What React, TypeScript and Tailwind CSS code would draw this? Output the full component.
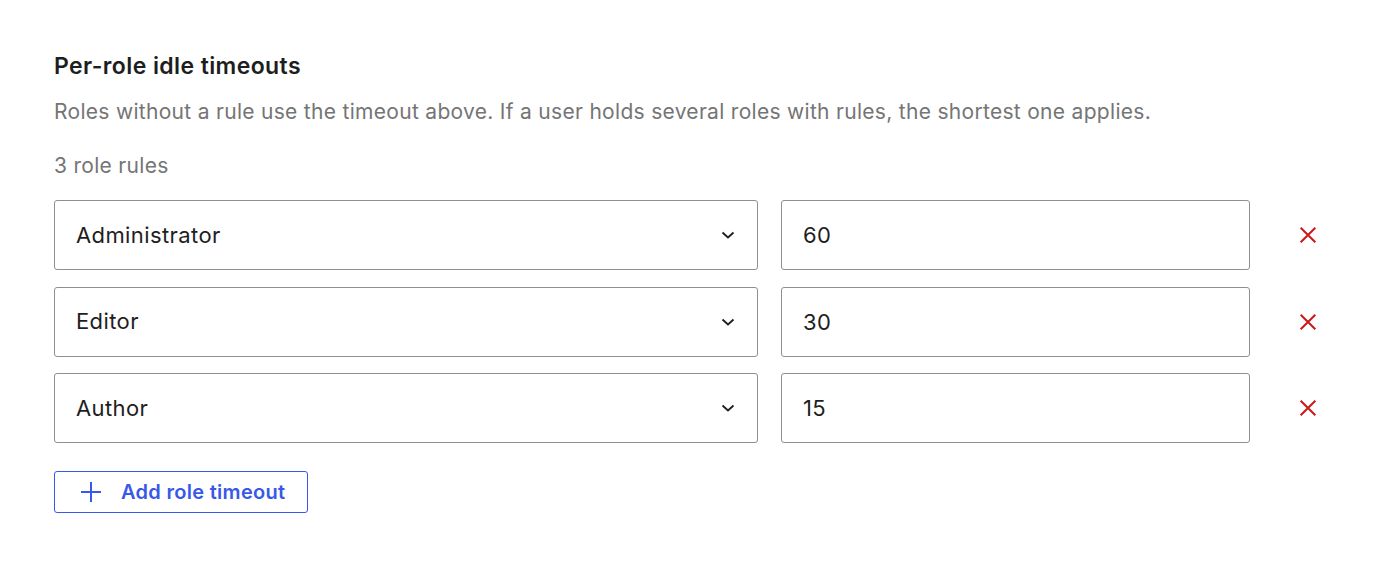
import React, { useState } from 'react';

type Rule = { id: number; role: string; minutes: string };

const roles = ['Administrator', 'Editor', 'Author', 'Contributor', 'Subscriber'];

const Chevron = () => (
  <svg width="16" height="16" viewBox="0 0 16 16" fill="none" stroke="#1e1e1e" strokeWidth="1.8" className="pointer-events-none block">
    <path d="M2.5 5.5L8 10.5l5.5-5" />
  </svg>
);

const Cross = () => (
  <svg width="22" height="22" viewBox="0 0 24 24" fill="none" stroke="#cc1818" strokeWidth="2.2">
    <path d="M4 4l16 16M20 4L4 20" />
  </svg>
);

const App: React.FC = () => {
  const [rules, setRules] = useState<Rule[]>([
    { id: 1, role: 'Administrator', minutes: '60' },
    { id: 2, role: 'Editor', minutes: '30' },
    { id: 3, role: 'Author', minutes: '15' },
  ]);

  const update = (id: number, patch: Partial<Rule>) =>
    setRules((r) => r.map((x) => (x.id === id ? { ...x, ...patch } : x)));

  return (
    <div className="min-h-[562px] bg-white px-[54px] pt-[50px] font-['Inter','Liberation_Sans',sans-serif] text-[#1e1e1e]">
      <h2 className="text-[23px] font-semibold leading-[32px] tracking-[0.4px]">Per-role idle timeouts</h2>
      <p className="mt-[16px] text-[21px] leading-[28px] tracking-[0.3px] text-[#757575]">
        Roles without a rule use the timeout above. If a user holds several roles with rules, the shortest one applies.
      </p>
      <p className="mt-[26px] text-[21px] leading-[28px] tracking-[0.3px] text-[#757575]">{rules.length} role rules</p>

      <div className="mt-[20px] flex flex-col gap-[16.5px]">
        {rules.map((rule) => (
          <div key={rule.id} className="flex items-center">
            <div className="relative w-[704px]">
              <select
                value={rule.role}
                onChange={(e) => update(rule.id, { role: e.target.value })}
                className="h-[70px] w-full appearance-none rounded-[3px] border-[1.5px] border-[#8f8f8f] bg-white pl-[21px] text-[22px] tracking-[0.4px] text-[#1e1e1e] outline-none"
              >
                {roles.map((r) => (
                  <option key={r} value={r}>{r}</option>
                ))}
              </select>
              <span className="absolute right-[22px] top-1/2 -translate-y-1/2">
                <Chevron />
              </span>
            </div>
            <input
              type="text"
              value={rule.minutes}
              onChange={(e) => update(rule.id, { minutes: e.target.value })}
              className="ml-[23px] h-[70px] w-[469px] rounded-[3px] border-[1.5px] border-[#8f8f8f] bg-white pl-[21px] text-[22px] tracking-[0.4px] text-[#1e1e1e] outline-none"
            />
            <button
              type="button"
              onClick={() => setRules((r) => r.filter((x) => x.id !== rule.id))}
              className="ml-[47px] flex h-[40px] w-[22px] items-center justify-center"
              aria-label="Remove rule"
            >
              <Cross />
            </button>
          </div>
        ))}
      </div>

      <button
        type="button"
        onClick={() => setRules((r) => [...r, { id: Date.now(), role: 'Contributor', minutes: '' }])}
        className="mt-[28px] flex h-[42px] items-center gap-[18px] rounded-[3px] border-[1.5px] border-[#3858e9] pl-[24px] pr-[22px] text-[20px] font-semibold tracking-[0.3px] text-[#3858e9]"
      >
        <svg width="24" height="24" viewBox="0 0 24 24" fill="none" stroke="#3858e9" strokeWidth="2">
          <path d="M12 2v20M2 12h20" />
        </svg>
        Add role timeout
      </button>
    </div>
  );
};

export default App;
